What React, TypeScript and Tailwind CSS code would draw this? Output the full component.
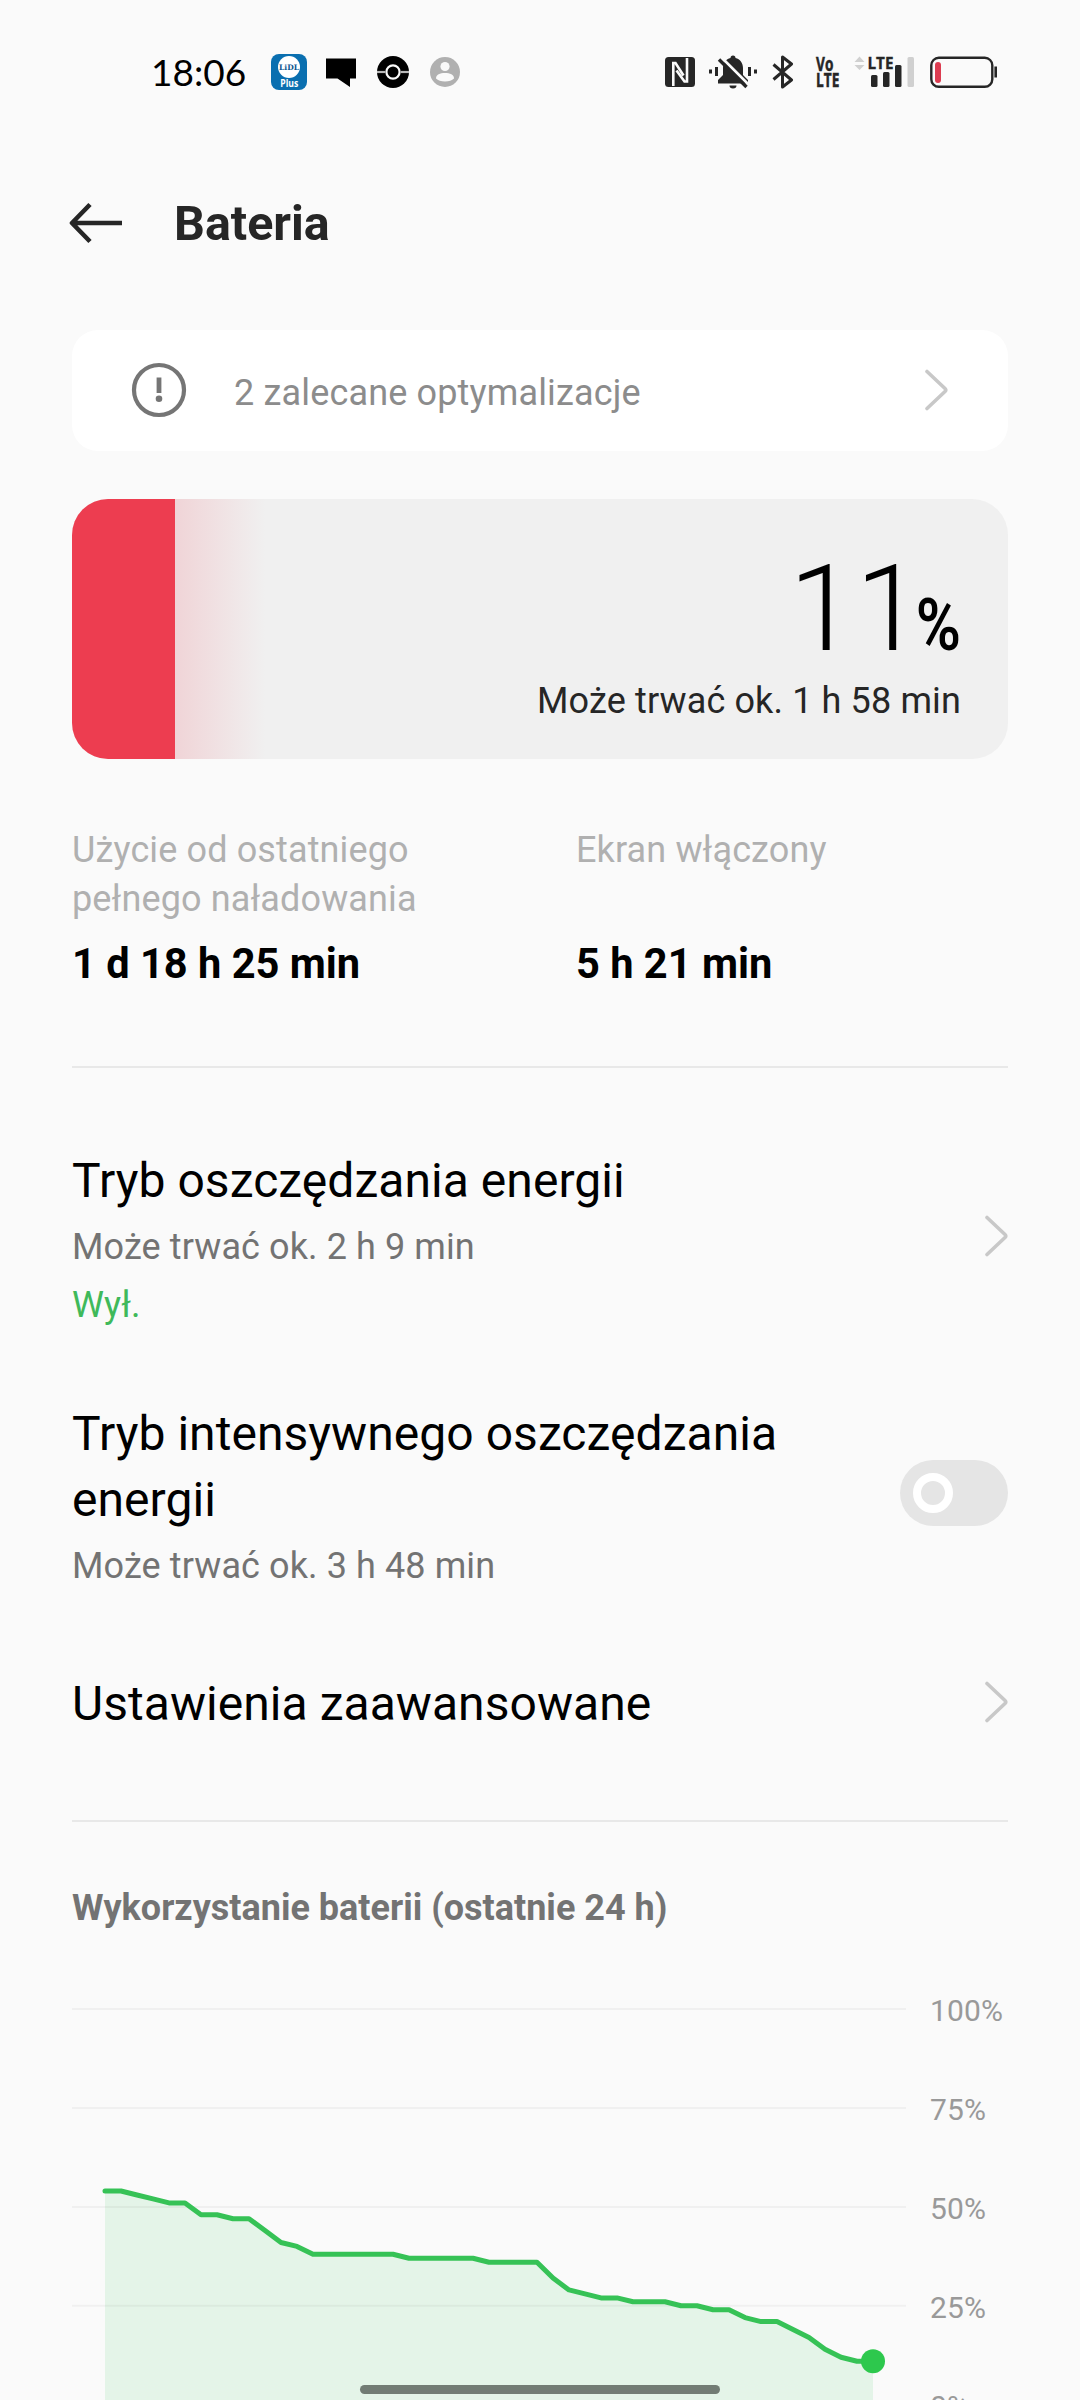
import type { ReactNode } from 'react';

const levels = [
  54, 54, 53, 52, 51, 51, 48, 48, 47, 47, 44, 41, 40, 38, 38, 38, 38, 38, 38, 37, 37, 37, 37, 37, 36, 36, 36, 36, 32,
  29, 28, 27, 27, 26, 26, 26, 25, 25, 24, 24, 22, 21, 21, 19, 17, 14, 12, 11, 11,
];

const STEP = 16;
const START_X = 33;
const TOP = 77;
const PER_PERCENT = 3.957;

const yOf = (v: number) => TOP + (100 - v) * PER_PERCENT;
const line = levels.map((v, i) => `${START_X + i * STEP},${yOf(v).toFixed(1)}`).join(' ');
const endX = START_X + (levels.length - 1) * STEP;

function Chevron({ className = '' }: { className?: string }) {
  return (
    <svg viewBox="0 0 26 42" className={`h-[42px] w-[26px] shrink-0 ${className}`} fill="none">
      <path d="M5 2.500 L23 19.500 Q24.500 21 23 22.500 L5 39.500" stroke="#c8c8c8" strokeWidth="3.600" strokeLinecap="round" strokeLinejoin="round" />
    </svg>
  );
}

function StatusBar() {
  return (
    <header className="flex h-36 shrink-0 items-center justify-between pr-[82px] pl-[151px]">
      <div className="flex items-center">
        <span className="w-[120px] font-[Lato,sans-serif] text-[37px] leading-[44px] text-black">18:06</span>
        <svg viewBox="0 0 36 36" className="h-9 w-9 overflow-visible">
          <rect width="36" height="36" rx="8" fill="#0a6fb0" />
          <circle cx="18" cy="13" r="11" fill="#fff" />
          <text x="18" y="16" textAnchor="middle" fontFamily="DejaVu Serif, serif" fontWeight="700" fontSize="7.4" textLength="20" lengthAdjust="spacingAndGlyphs" fill="#0a5590">LiDL</text>
          <text x="18.300" y="33" textAnchor="middle" fontFamily="Open Sans, sans-serif" fontWeight="700" fontSize="10" textLength="18" lengthAdjust="spacingAndGlyphs" fill="#fff">Plus</text>
        </svg>
        <svg viewBox="0 0 30 30" className="ml-[19px] h-[30px] w-[30px]">
          <path d="M0 1.500H30V21.500H24V30L11.500 21.500H0Z" fill="#000" />
        </svg>
        <svg viewBox="0 0 32 32" className="ml-[21px] h-8 w-8">
          <circle cx="16" cy="16" r="16" fill="#000" />
          <path d="M0 16H32" stroke="#b8b8b8" strokeWidth="2.200" />
          <circle cx="16" cy="16" r="8" fill="#000" />
          <circle cx="16" cy="16" r="6.600" fill="none" stroke="#fafafa" strokeWidth="2.200" />
        </svg>
        <svg viewBox="0 0 30 30" className="ml-[21px] h-[30px] w-[30px]">
          <circle cx="15" cy="15" r="15" fill="#b0b0b0" />
          <circle cx="15" cy="9.500" r="4.600" fill="#fafafa" />
          <path d="M6 21.500C6 17.500 10 16 15 16S24 17.500 24 21.500C22 23.600 19 24.500 15 24.500S8 23.600 6 21.500Z" fill="#fafafa" />
        </svg>
      </div>

      <div className="flex items-center">
        <svg viewBox="0 0 30 30" className="h-[30px] w-[30px]">
          <rect width="30" height="30" rx="3.500" fill="#262626" />
          <path d="M8.300 29V6H10.500L18.500 18.500M22 1V24.500H19.500L11.500 13.500" fill="none" stroke="#fafafa" strokeWidth="2.600" />
        </svg>
        <svg viewBox="0 0 50 34" className="ml-[13px] h-[34px] w-[50px]" fill="#262626">
          <path d="M1 14.500h3v4h-3zM7 12h3v9h-3zM40 12h3v9h-3zM46 14.500h3v4h-3z" />
          <path d="M25 0.500a2.500 2.500 0 0 1 2.500 2.500C32 4 35 8 35 13v7l5 5v3.500H10V25l5-5v-7C15 8 18 4 22.500 3A2.500 2.500 0 0 1 25 .5Z" />
          <path d="M21.500 30.500h7a3.500 3 0 0 1-7 0Z" />
          <path d="M13 2L41 30" stroke="#fafafa" strokeWidth="2.800" />
          <path d="M11 4.500L38.500 32" stroke="#262626" strokeWidth="3.400" />
        </svg>
        <svg viewBox="0 0 22 34" className="ml-[14px] h-[34px] w-[22px]" fill="none">
          <path d="M1.500 9.500L19.500 25L10.500 32V2L19.500 9L1.500 24.500" stroke="#262626" strokeWidth="3" strokeLinejoin="round" />
        </svg>
        <svg viewBox="0 0 24 32" className="ml-[22px] h-8 w-6 overflow-visible" fill="#262626" stroke="#262626" strokeWidth="0.500" fontFamily="Open Sans, sans-serif" fontWeight="700">
          <g transform="scale(0.72 1)">
            <text x="0" y="14.700" fontSize="19">Vo</text>
            <text x="0" y="30.800" fontSize="19">LTE</text>
          </g>
        </svg>
        <svg viewBox="0 0 61 32" className="ml-[14px] h-8 w-[61px] overflow-visible">
          <path d="M0.500 6L5.500 0.500L10.500 6ZM0.500 9L5.500 14L10.500 9Z" fill="#d0d0d0" />
          <text x="13.500" y="12.700" fill="#262626" stroke="#262626" strokeWidth="0.300" fontFamily="Open Sans, sans-serif" fontWeight="700" fontSize="15.500" textLength="26" lengthAdjust="spacingAndGlyphs">LTE</text>
          <rect x="17" y="19" width="6.500" height="12" rx="1.500" fill="#262626" />
          <rect x="29" y="16" width="6.500" height="15" rx="1.500" fill="#262626" />
          <rect x="41" y="9" width="6.500" height="22" rx="1.500" fill="#262626" />
          <rect x="53.500" y="1" width="6.500" height="30" rx="1.500" fill="#d0d0d0" />
        </svg>
        <svg viewBox="0 0 68 32" className="ml-[15px] h-8 w-[68px]">
          <rect x="1.300" y="1.800" width="61" height="29" rx="7.500" fill="none" stroke="#262626" strokeWidth="2.400" />
          <rect x="5" y="6" width="6" height="21" rx="3" fill="#dc3c50" />
          <path d="M65.700 10.500V21.500" stroke="#262626" strokeWidth="2.600" />
        </svg>
      </div>
    </header>
  );
}

function Setting({ title, note, state, trailing, className = '' }: {
  title: string;
  note?: string;
  state?: string;
  trailing: ReactNode;
  className?: string;
}) {
  return (
    <section className={`flex items-center justify-between ${className}`}>
      <div className="w-[740px]">
        <h2 className="text-[48px] leading-[66px] tracking-[0.05px] text-black">{title}</h2>
        {note && <p className="mt-[9px] text-[36px] leading-[48px] tracking-[0.1px] text-[#737373]">{note}</p>}
        {state && <p className="mt-[10px] text-[36px] leading-[48px] tracking-[0.1px] text-[#3fb95a]">{state}</p>}
      </div>
      {trailing}
    </section>
  );
}

function Stat({ label, value }: { label: string; value: string }) {
  return (
    <div className="flex w-[504px] shrink-0 flex-col justify-between">
      <p className="w-[380px] text-[36px] leading-[49px] tracking-[0.13px] text-[#b0b0b0]">{label}</p>
      <p className="mt-[16px] text-[41.6px] leading-[48px] font-bold text-black">{value}</p>
    </div>
  );
}

function UsageChart() {
  return (
    <div className="flex">
      <svg viewBox="0 0 834 469" className="h-[469px] w-[834px] shrink-0 overflow-visible">
        <polygon points={`${START_X},474 ${line} ${endX},474`} fill="#e4f4e8" />
        {[100, 75, 50, 25].map((v) => (
          <path key={v} d={`M0 ${yOf(v).toFixed(1)}H834`} stroke="#000" strokeOpacity="0.04" strokeWidth="2" />
        ))}
        <polyline points={line} fill="none" stroke="#36c256" strokeWidth="5" strokeLinecap="round" strokeLinejoin="round" />
        <circle cx={endX} cy={yOf(11)} r="12" fill="#2dc84d" />
      </svg>
      <div className="ml-[24px] flex flex-col gap-[62.9px] pt-[61px] text-[30px] leading-[36px] tracking-[0.1px] text-[#999999]">
        {['100%', '75%', '50%', '25%', '0%'].map((t) => (
          <span key={t}>{t}</span>
        ))}
      </div>
    </div>
  );
}

export default function App() {
  return (
    <div className="relative flex h-[2400px] w-[1080px] flex-col overflow-hidden bg-[#fafafa] font-[Roboto,sans-serif]">
      <StatusBar />

      <div className="flex h-[160px] shrink-0 items-center pl-[69px]">
        <svg viewBox="0 0 54 42" className="mb-0.5 h-[42px] w-[54px]" fill="none" stroke="#262626">
          <path d="M53 21H3M21 2.500L3 21L21 39.500" strokeWidth="4.600" strokeLinejoin="round" />
        </svg>
        <h1 className="ml-[51px] text-[48.4px] leading-[56px] font-bold text-[#262626]">Bateria</h1>
      </div>

      <main className="mt-[26px] px-[72px]">
        <section className="flex h-[121px] items-center rounded-[26px] bg-white pr-[58px] pl-[59px]">
          <svg viewBox="0 0 56 56" className="mb-0.5 h-14 w-14" fill="none">
            <circle cx="28" cy="28" r="25" stroke="#757575" strokeWidth="4.200" />
            <path d="M28 15.500V31" stroke="#757575" strokeWidth="4.800" />
            <circle cx="28" cy="36.700" r="3.300" fill="#757575" />
          </svg>
          <p className="ml-[47px] flex-1 pt-[5px] text-[36px] leading-[48px] tracking-[0.16px] text-[#8c8c8c]">2 zalecane optymalizacje</p>
          <Chevron className="mr-0.5 mb-0.5" />
        </section>

        <section className="mt-12 flex h-[260px] overflow-hidden rounded-[36px] bg-[#f0f0f0]">
          <div className="w-[103px] bg-[#ed3d50]" />
          <div className="w-[90px] bg-linear-to-r from-[#f0d4d7] to-[#f0f0f0]" />
          <div className="flex flex-1 flex-col items-end pt-[50px] pr-[47px]">
            <p className="flex h-[120px] items-baseline text-black">
              <span className="text-[120px] leading-[120px] font-light">11</span>
              <span className="-ml-[8px] w-[47px] origin-left scale-x-[0.84] pl-[2px] text-[73px] leading-[72px] font-semibold">%</span>
            </p>
            <p className="mt-[8px] text-[36px] leading-[48px] tracking-[0.13px] text-[#262626]">Może trwać ok. 1 h 58 min</p>
          </div>
        </section>

        <section className="mt-[67px] flex">
          <Stat label="Użycie od ostatniego pełnego naładowania" value="1 d 18 h 25 min" />
          <Stat label="Ekran włączony" value="5 h 21 min" />
        </section>

        <hr className="mt-[78px] border-t-2 border-[#e8e8e8]" />

        <Setting
          className="mt-[80px]"
          title="Tryb oszczędzania energii"
          note="Może trwać ok. 2 h 9 min"
          state="Wył."
          trailing={<Chevron className="mb-[5px]" />}
        />
        <Setting
          className="mt-[72px]"
          title="Tryb intensywnego oszczędzania energii"
          note="Może trwać ok. 3 h 48 min"
          trailing={
            <div className="mb-[5px] flex h-[66px] w-[108px] items-center rounded-full bg-[#e5e5e5] pl-[13px]">
              <div className="h-10 w-10 rounded-full border-8 border-white" />
            </div>
          }
        />
        <Setting className="mt-[81px]" title="Ustawienia zaawansowane" trailing={<Chevron className="mb-[4px]" />} />

        <hr className="mt-[83px] border-t-2 border-[#e8e8e8]" />

        <h3 className="mt-[62px] text-[36px] leading-[48px] font-bold text-[#737373]">Wykorzystanie baterii (ostatnie 24 h)</h3>
        <UsageChart />
      </main>

      <div className="absolute bottom-[6px] left-[360px] h-[9px] w-[360px] rounded-full bg-[#727c74]" />
    </div>
  );
}
